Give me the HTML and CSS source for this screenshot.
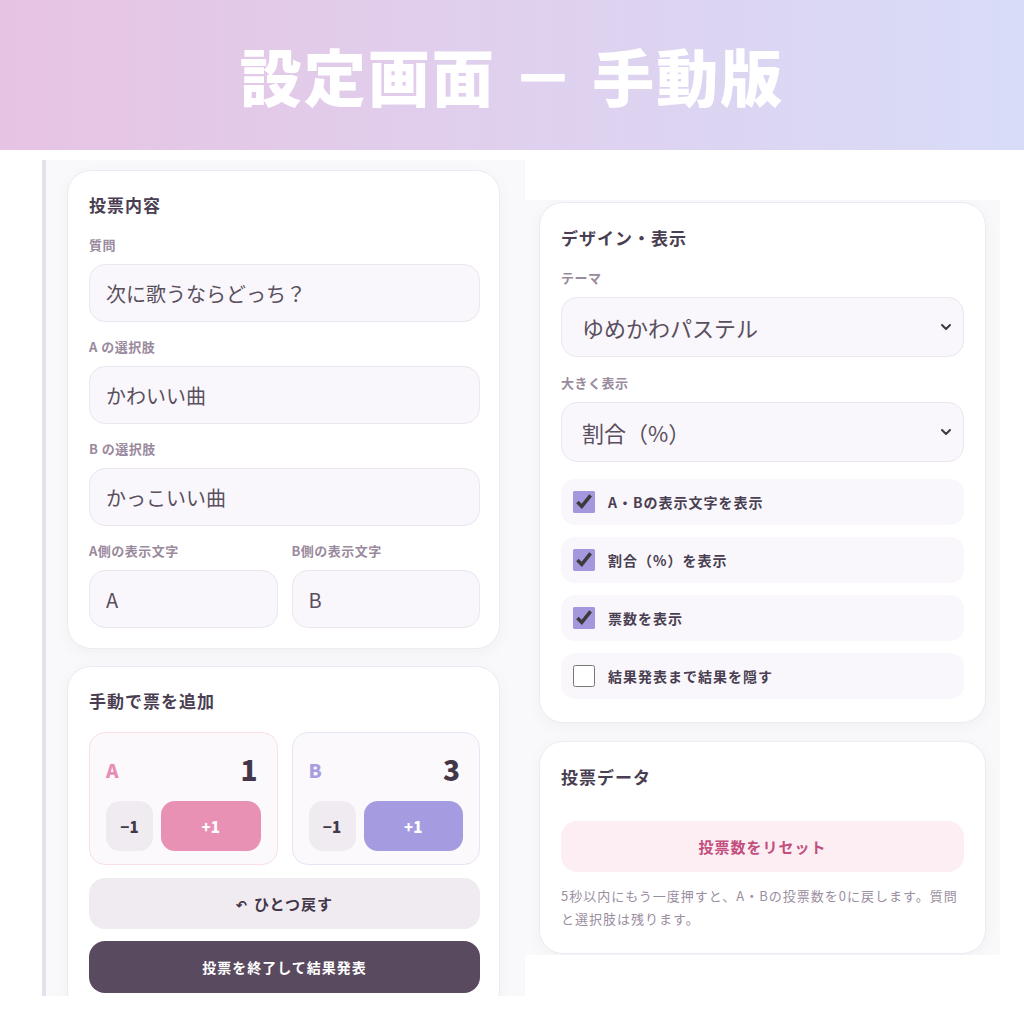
FILE: index.html
```html
<!DOCTYPE html>
<html lang="ja">
<head>
	<meta charset="UTF-8">
	<title>設定画面 － 手動版</title>
	<link rel="stylesheet" href="styles.css">
</head>
<body>
	<header class="banner">
		<h1>設定画面 － 手動版</h1>
	</header>

	<div class="shots">
		<!-- 左：投票内容と手動カウント -->
		<div class="shot shot-left">
			<section class="card">
				<h2>投票内容</h2>
				<div class="field">
					<label>質問</label>
					<input class="text" type="text" value="次に歌うならどっち？">
				</div>
				<div class="field">
					<label>A の選択肢</label>
					<input class="text" type="text" value="かわいい曲">
				</div>
				<div class="field">
					<label>B の選択肢</label>
					<input class="text" type="text" value="かっこいい曲">
				</div>
				<div class="pair">
					<div class="field">
						<label>A側の表示文字</label>
						<input class="text" type="text" value="A">
					</div>
					<div class="field">
						<label>B側の表示文字</label>
						<input class="text" type="text" value="B">
					</div>
				</div>
			</section>

			<section class="card">
				<h2>手動で票を追加</h2>
				<div class="pair">
					<div class="counter counter-a">
						<div class="counter-top"><span class="side">A</span><span class="num">1</span></div>
						<div class="counter-btns"><button class="minus">−1</button><button class="plus">+1</button></div>
					</div>
					<div class="counter counter-b">
						<div class="counter-top"><span class="side">B</span><span class="num">3</span></div>
						<div class="counter-btns"><button class="minus">−1</button><button class="plus">+1</button></div>
					</div>
				</div>
				<button class="wide undo"><span class="undo-icon">↶</span>ひとつ戻す</button>
				<button class="wide finish">投票を終了して結果発表</button>
			</section>
		</div>

		<!-- 右：デザインと投票データ -->
		<div class="shot shot-right">
			<section class="card">
				<h2>デザイン・表示</h2>
				<div class="field">
					<label>テーマ</label>
					<div class="select">
						<select><option>ゆめかわパステル</option></select>
						<svg viewBox="0 0 12 12" width="12" height="12"><path d="M2 4l4 4 4-4" fill="none" stroke="#3f3546" stroke-width="2" stroke-linecap="round" stroke-linejoin="round"/></svg>
					</div>
				</div>
				<div class="field">
					<label>大きく表示</label>
					<div class="select">
						<select><option>割合（%）</option></select>
						<svg viewBox="0 0 12 12" width="12" height="12"><path d="M2 4l4 4 4-4" fill="none" stroke="#3f3546" stroke-width="2" stroke-linecap="round" stroke-linejoin="round"/></svg>
					</div>
				</div>
				<div class="checks">
					<label class="check"><input type="checkbox" checked>A・Bの表示文字を表示</label>
					<label class="check"><input type="checkbox" checked>割合（%）を表示</label>
					<label class="check"><input type="checkbox" checked>票数を表示</label>
					<label class="check"><input type="checkbox">結果発表まで結果を隠す</label>
				</div>
			</section>

			<section class="card">
				<h2>投票データ</h2>
				<button class="wide reset">投票数をリセット</button>
				<p class="note">5秒以内にもう一度押すと、A・Bの投票数を0に戻します。質問と選択肢は残ります。</p>
			</section>
		</div>
	</div>
</body>
</html>
```

FILE: styles.css
```css
body{margin: 0;background: #fff;font-family: "Noto Sans CJK JP", "Noto Sans", sans-serif;color: #4a3f52;}
button, input, select{font-family: inherit;}

.banner{height: 150px;display: flex;align-items: center;justify-content: center;
	background: linear-gradient(90deg, #e7c3e3, #dfd0ee 50%, #d8dcf8);}
.banner h1{margin: 0;color: #fff;font-size: 62px;font-weight: 900;letter-spacing: 2px;line-height: 1;}

.shots{display: flex;align-items: flex-start;}
.shot{background: #f9f9fb;overflow: hidden;box-sizing: border-box;}
.shot-left{margin: 10px 0 0 42px;width: 483px;height: 836px;border-left: 4px solid #e4e0ec;padding: 10px 25px 0 21px;}
.shot-right{margin-top: 50px;width: 475px;height: 755px;padding: 2px 14px 0 14px;}

.card{background: #fff;border: 1px solid #eeeaf1;border-radius: 24px;box-shadow: 0 4px 14px rgba(90,70,110,.05);
	padding: 21px 19px 20px 21px;margin-bottom: 17px;}
.card h2{margin: 0 0 18px;font-size: 17px;line-height: 26px;font-weight: 700;letter-spacing: 1px;}
.shot-right .card{padding: 22px 21px 23px 21px;margin-bottom: 18px;}

.field{display: flex;flex-direction: column;gap: 10px;margin-bottom: 16px;}
.field label{font-size: 13px;line-height: 18px;font-weight: 700;color: #9a8a9d;letter-spacing: .5px;}
.card > .field:last-child, .pair .field{margin-bottom: 0;}
.shot-right .field{margin-bottom: 17px;}
.pair{display: grid;grid-template-columns: 1fr 1fr;gap: 14px;}

.text{box-sizing: border-box;width: 100%;height: 58px;border: 1px solid #ebe6ef;border-radius: 16px;background: #f9f7fb;
	padding: 0 16px;font-size: 20px;color: #5a4f5e;outline: none;}

.select{position: relative;}
.select select{appearance: none;width: 100%;height: 60px;border: 1px solid #ebe6ef;border-radius: 16px;background: #f9f7fb;
	padding: 0 20px;font-size: 22px;color: #5a4f5e;outline: none;}
.select svg{position: absolute;right: 12px;top: 24px;}

.checks{display: flex;flex-direction: column;gap: 12px;}
.check{display: flex;align-items: center;gap: 13px;height: 46px;padding: 0 12px;background: #f9f7fb;border-radius: 14px;
	font-size: 14px;font-weight: 700;letter-spacing: 1px;color: #4a3f52;}
.check input{margin: 0;width: 22px;height: 22px;accent-color: #a497dd;}

.counter{box-sizing: border-box;height: 133px;border-radius: 16px;background: #fcf9fc;padding: 16px 16px 15px;}
.counter-a{border: 1px solid #f8dfe8;}
.counter-b{border: 1px solid #e7e4f7;}
.counter-top{display: flex;justify-content: space-between;align-items: center;height: 40px;margin-bottom: 12px;padding-right: 3px;}
.side{font-size: 19px;font-weight: 900;}
.counter-a .side{color: #e68fb3;}
.counter-b .side{color: #a79ee0;}
.num{font-size: 28px;font-weight: 900;color: #43384a;}
.counter-btns{display: flex;gap: 8px;}
.counter-btns button{height: 50px;border: none;border-radius: 14px;font-size: 15px;font-weight: 900;}
.minus{width: 47px;background: #efebf0;color: #43384a;}
.plus{flex: 1;color: #fff;}
.counter-a .plus{background: #e891b4;}
.counter-b .plus{background: #a59be0;}

.wide{display: block;width: 100%;border: none;border-radius: 16px;font-weight: 700;}
.undo{height: 51px;margin-top: 13px;background: #f0eaf1;color: #43384a;font-size: 15px;letter-spacing: 1px;}
.undo-icon{font-size: 13px;margin-right: 6px;}
.finish{height: 52px;margin-top: 12px;background: #5a4a60;color: #fff;font-size: 14px;letter-spacing: 1px;}
.reset{height: 51px;margin-top: 31px;background: #fdeef3;color: #c24f7e;font-size: 15px;letter-spacing: 1px;}
.note{margin: 12px 0 0;font-size: 13px;line-height: 23px;color: #9b8e9f;letter-spacing: 1px;}
```
